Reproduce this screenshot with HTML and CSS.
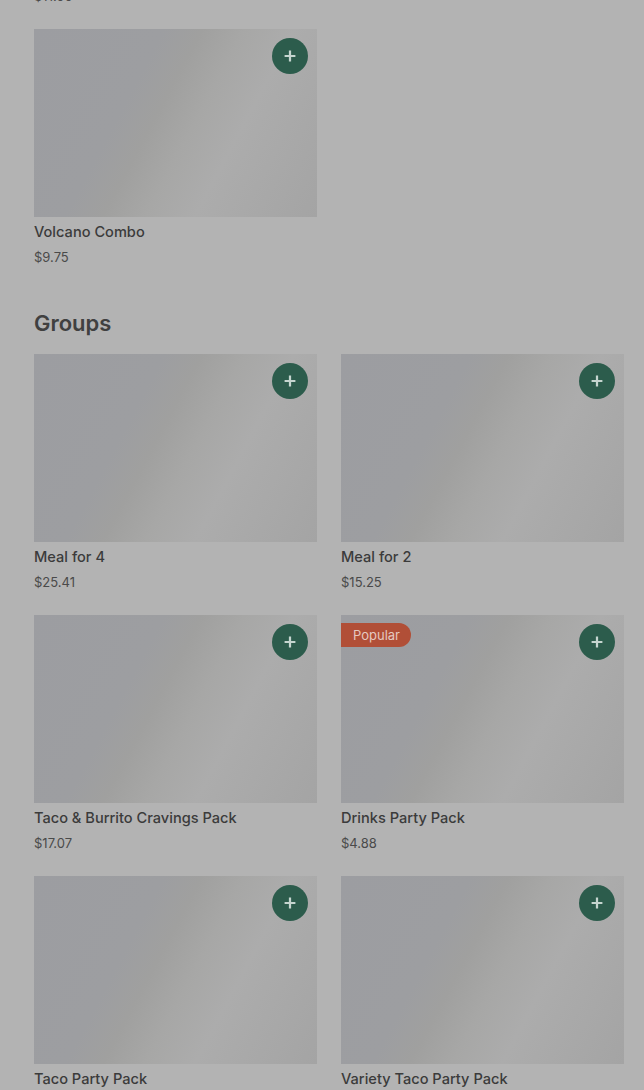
FILE: index.html
```html
<!DOCTYPE html>
<html lang="en">
<head>
<meta charset="utf-8">
<title>Menu</title>
<link rel="stylesheet" href="styles.css">
</head>
<body>
<main class="menu">
  <p class="price price-cut">$11.00</p>
  <div class="grid first-grid">
    <article class="card">
      <div class="photo"><button class="add" aria-label="Add"><svg viewBox="0 0 14 14"><path d="M7 .7v12.6M.7 7h12.6"/></svg></button></div>
      <h3 class="name">Volcano Combo</h3>
      <p class="price">$9.75</p>
    </article>
  </div>
  <h2 class="heading">Groups</h2>
  <div class="grid">
    <article class="card">
      <div class="photo"><button class="add" aria-label="Add"><svg viewBox="0 0 14 14"><path d="M7 .7v12.6M.7 7h12.6"/></svg></button></div>
      <h3 class="name">Meal for 4</h3>
      <p class="price">$25.41</p>
    </article>
    <article class="card">
      <div class="photo"><button class="add" aria-label="Add"><svg viewBox="0 0 14 14"><path d="M7 .7v12.6M.7 7h12.6"/></svg></button></div>
      <h3 class="name">Meal for 2</h3>
      <p class="price">$15.25</p>
    </article>
    <article class="card">
      <div class="photo"><button class="add" aria-label="Add"><svg viewBox="0 0 14 14"><path d="M7 .7v12.6M.7 7h12.6"/></svg></button></div>
      <h3 class="name">Taco &amp; Burrito Cravings Pack</h3>
      <p class="price">$17.07</p>
    </article>
    <article class="card">
      <div class="photo"><span class="badge">Popular</span><button class="add" aria-label="Add"><svg viewBox="0 0 14 14"><path d="M7 .7v12.6M.7 7h12.6"/></svg></button></div>
      <h3 class="name">Drinks Party Pack</h3>
      <p class="price">$4.88</p>
    </article>
    <article class="card">
      <div class="photo"><button class="add" aria-label="Add"><svg viewBox="0 0 14 14"><path d="M7 .7v12.6M.7 7h12.6"/></svg></button></div>
      <h3 class="name">Taco Party Pack</h3>
    </article>
    <article class="card">
      <div class="photo"><button class="add" aria-label="Add"><svg viewBox="0 0 14 14"><path d="M7 .7v12.6M.7 7h12.6"/></svg></button></div>
      <h3 class="name">Variety Taco Party Pack</h3>
    </article>
  </div>
</main>
</body>
</html>
```
FILE: styles.css
```css
html, body {
  margin: 0;
  height: 1090px;
  overflow: hidden;
  background: #b3b3b3;
}
.menu {
  padding: 0 20px 0 34px;
  font-family: Inter, "Liberation Sans", sans-serif;
  color: #3b3b3b;
}
.grid {
  display: grid;
  grid-template-columns: 283px 283px;
  column-gap: 24px;
  row-gap: 24px;
}
.first-grid { margin-top: 24px; }
.card { min-width: 0; }
.photo {
  position: relative;
  height: 188px;
  background: linear-gradient(118deg, #9c9da1 0%, #9d9ea1 34%, #a0a09f 44%, #a7a7a6 55%, #acacac 68%, #a4a4a4 100%);
}
.add {
  position: absolute;
  top: 9px;
  right: 9px;
  width: 36px;
  height: 36px;
  padding: 0;
  border: 0;
  border-radius: 50%;
  background: #2c5c4c;
  display: flex;
  align-items: center;
  justify-content: center;
}
.add svg { width: 12px; height: 12px; }
.add path { fill: none; stroke: #c5d5cf; stroke-width: 2.6; }
.badge {
  position: absolute;
  top: 8px;
  left: 0;
  height: 24px;
  padding: 0 11px 0 12px;
  border-radius: 0 12px 12px 0;
  background: #b14f37;
  color: #e5c9c0;
  font-size: 13px;
  line-height: 24px;
}
.name {
  margin: 6px 0 0;
  font-size: 14.6px;
  font-weight: 500;
  line-height: 19px;
}
.price {
  margin: 6px 0 0;
  font-size: 13px;
  font-weight: 400;
  line-height: 18px;
  color: #4a4a4a;
}
.price-cut {
  margin-top: -13px;
}
.heading {
  margin: 42px 0 16px;
  font-size: 22px;
  font-weight: 600;
  line-height: 30px;
  color: #404040;
}
```
